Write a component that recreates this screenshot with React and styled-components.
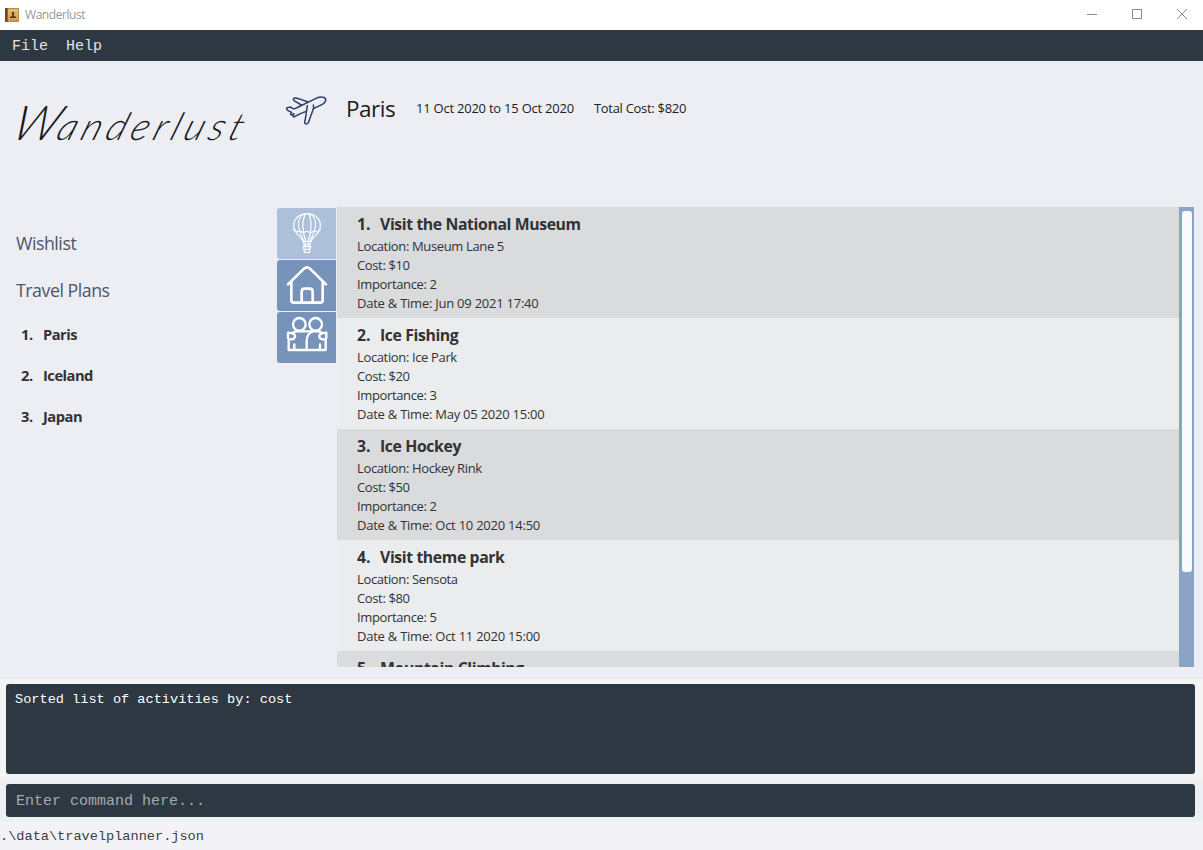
import React from 'react';
import styled, { createGlobalStyle } from 'styled-components';

const GlobalStyle = createGlobalStyle`
  * { box-sizing: border-box; }
  body { margin: 0; background: #edeef4; }
`;

const ui = '"Open Sans", "Noto Sans", sans-serif';
const mono = '"Liberation Mono", monospace';
const navy = '#2d3842';

const Window = styled.div`
  width: 1203px;
  height: 850px;
  display: flex;
  flex-direction: column;
  overflow: hidden;
  background: #edeef4;
  color: #323232;
  font-family: ${ui};
  white-space: nowrap;
`;

const TitleBar = styled.header`
  flex: 0 0 30px;
  display: flex;
  align-items: center;
  padding-left: 5px;
  background: #fff;
`;

const TitleText = styled.span`
  flex: 1;
  margin-left: 6px;
  color: #999;
  font-size: 12px;
  line-height: 16px;
  letter-spacing: -0.45px;
`;

const WindowControls = styled.div`
  display: flex;
  align-items: center;
  gap: 35px;
  padding: 0 16px 2px 0;
  svg { display: block; }
`;

const MenuBar = styled.nav`
  flex: 0 0 31px;
  display: flex;
  align-items: center;
  gap: 18px;
  padding: 2px 0 0 12px;
  background: ${navy};
  color: #e2e4e6;
  font: 15px ${mono};
`;

const Main = styled.main`
  flex: 0 0 618px;
  display: flex;
`;

const Sidebar = styled.aside`
  width: 277px;
  padding: 34px 0 0 10px;
`;

const Wordmark = styled.h1`
  height: 54px;
  margin: 0 0 82px;
  color: #17191d;
  font: italic 300 38px/54px Lato, sans-serif;
  letter-spacing: 5.1px;
  transform: skewX(-20deg);
  transform-origin: 0 80%;
  &::first-letter { font-size: 48px; letter-spacing: 0; }
`;

const SectionLink = styled.div`
  height: 47px;
  margin-left: 6px;
  line-height: 25px;
  color: #4a5763;
  font-size: 17.8px;
  letter-spacing: -0.48px;
`;

const PlanList = styled.ol`
  list-style: none;
  margin: -2px 0 0;
  padding: 0 0 0 11px;
`;

const PlanItem = styled.li`
  height: 41px;
  display: flex;
  line-height: 22px;
  font-size: 14.7px;
  font-weight: 700;
  letter-spacing: -0.5px;
`;

const PlanIndex = styled.span`
  width: 22px;
`;

const Content = styled.section`
  width: 917px;
  display: flex;
  flex-direction: column;
`;

const PlanHeader = styled.div`
  flex: 0 0 146px;
  display: flex;
  align-items: flex-start;
  padding: 24px 0 0 3px;
`;

const PlanName = styled.h2`
  width: 70px;
  margin: 0 0 0 14px;
  color: #1b1c1f;
  font-size: 22.5px;
  font-weight: 400;
  line-height: 48px;
  letter-spacing: -0.5px;
`;

const PlanMeta = styled.span`
  color: #1b1c1f;
  font-size: 13px;
  line-height: 47px;
  letter-spacing: ${(p) => p.$tracking}px;
  margin-right: 20px;
`;

const Browser = styled.div`
  height: 460px;
  display: flex;
`;

const Tabs = styled.div`
  width: 60px;
  display: flex;
  flex-direction: column;
  gap: 1px;
  padding: 1px 1px 0 0;
`;

const Tab = styled.button`
  height: 51px;
  padding: 0;
  border: 0;
  border-radius: 3px 0 0 3px;
  background: ${(p) => (p.$active ? '#adc0d9' : '#7893b9')};
  svg { display: block; }
`;

const Activities = styled.div`
  width: 842px;
  overflow: hidden;
`;

const ActivityCard = styled.article`
  height: 111px;
  padding: 6px 0 0 20px;
  background: #ebecee;
  &:nth-child(odd) { background: #dadbdd; }
`;

const ActivityTitle = styled.h3`
  display: flex;
  margin: 0 0 1px;
  font-size: 15.8px;
  line-height: 23px;
  font-weight: 700;
  letter-spacing: -0.39px;
`;

const ActivityIndex = styled.span`
  width: 23px;
  letter-spacing: 0;
`;

const Detail = styled.div`
  height: 19px;
  font-size: 13px;
  line-height: 19px;
  letter-spacing: ${(p) => p.$tracking ?? -0.36}px;
`;

const ScrollTrack = styled.div`
  width: 15px;
  padding: 4px 2px 0 3px;
  background: #8ba4c5;
`;

const ScrollThumb = styled.div`
  height: 361px;
  border-radius: 3px;
  background: #fafafd;
`;

const ResultPane = styled.div`
  flex: 0 0 100px;
  padding: 5px 8px 5px 6px;
  background: #f4f4f4;
`;

const ResultBox = styled.div`
  height: 90px;
  padding: 6px 9px;
  border-radius: 3px;
  background: ${navy};
  color: #fff;
  font: 13.6px/20px ${mono};
`;

const CommandPane = styled.div`
  flex: 0 0 43px;
  padding: 5px 8px 5px 6px;
  background: #eceff4;
`;

const CommandInput = styled.input`
  display: block;
  width: 100%;
  height: 33px;
  padding: 2px 10px 0;
  border: 0;
  border-radius: 3px;
  background: ${navy};
  font: 15px ${mono};
  &::placeholder { color: #a6a9ab; opacity: 1; }
`;

const StatusBar = styled.footer`
  flex: 1;
  background: #f3f2f7;
  color: #3c3d40;
  font: 13.6px/30px ${mono};
`;

const AppIcon = () => (
  <svg width="14" height="14" viewBox="0 0 14 14">
    <defs>
      <linearGradient id="cover" x2="0" y2="1">
        <stop stopColor="#e9bd6c" />
        <stop offset="1" stopColor="#d09c4c" />
      </linearGradient>
    </defs>
    <rect width="14" height="14" rx="1" fill="#b58646" />
    <rect x="3" y="1" width="10" height="12" fill="url(#cover)" />
    <rect width="2.5" height="14" fill="#5e4940" />
    <path d="M6.700 5a1.300 1.300 0 0 1 2.600 0L8.800 7v1l2.200.7V10H5V8.700l2.200-.7V7z" fill="#4f3c26" />
  </svg>
);

const Plane = () => (
  <svg width="52" height="45" viewBox="0 0 156 135" fill="none" stroke="#2d3e67" strokeWidth="4.500" strokeLinejoin="round" strokeLinecap="round">
    <path d="M64 60L42 47C38 43 41 38 47 39L56 41L84 51" />
    <path d="M100 71L127 58C140 51 140 40 130 37C123 34 111 38 102 43L55 66C49 69 44 73 39 71L31 66L21 68C19 70 20 73 23 76L35 82L32 86C31 88 33 90 37 89L42 86L38 92L41 96L63 85L79 79" />
    <path d="M82 62L77 96L74 112C74 118 81 119 85 113L101 69L100 60" />
  </svg>
);

const TabIcon = styled.svg.attrs({ viewBox: '0 0 177 153', width: 59, height: 51 })`
  fill: none;
  stroke: #fff;
  stroke-width: ${(p) => p.$weight}px;
  stroke-linecap: round;
  stroke-linejoin: round;
`;

const Balloon = () => (
  <TabIcon $weight={3.4}>
    <path d="M79 101C71 83 50 77 50 53C50 32 67 17 90 17S130 32 130 53C130 77 109 83 101 101Z" />
    <path d="M81 18C55 31 63 67 82 101M86 17C74 36 76 75 87 101M94 17C106 36 104 75 93 101M99 18C125 31 117 67 98 101" />
    <path d="M50 65L60 72L69 69L79 74L90 70L101 74L111 69L120 72L130 65" />
    <path d="M79 101L81 108H99L101 101M81 108L82 116M99 108L98 116M86 108V116M94 108V116M78 116H102M80 117L82 133H98L100 117M81 124H99" />
  </TabIcon>
);

const House = () => (
  <TabIcon $weight={8}>
    <path d="M33 73L81 26Q90 18 99 26L147 73M43 65V121Q43 128 50 128H130Q137 128 137 121V65M74 127V95Q74 86 83 86H98Q107 86 107 95V127" />
  </TabIcon>
);

const Friends = () => (
  <TabIcon $weight={7}>
    <circle cx="67" cy="37" r="19" />
    <circle cx="116" cy="37" r="19" />
    <path d="M35 84V114H146V84M35 82H43Q53 82 54 73Q54 65 46 64L33 62V78L35 82M47 62Q52 58 60 58H121Q130 58 135 62M146 82H138Q128 82 127 73Q127 65 135 64L148 62V78L146 82M89 114V88C89 72 97 60 109 58M52 97V114M129 97V114" />
  </TabIcon>
);

const plans = ['Paris', 'Iceland', 'Japan'];

const activities = [
  { name: 'Visit the National Museum', location: 'Museum Lane 5', cost: 10, importance: 2, when: 'Jun 09 2021 17:40' },
  { name: 'Ice Fishing', location: 'Ice Park', cost: 20, importance: 3, when: 'May 05 2020 15:00' },
  { name: 'Ice Hockey', location: 'Hockey Rink', cost: 50, importance: 2, when: 'Oct 10 2020 14:50' },
  { name: 'Visit theme park', location: 'Sensota', cost: 80, importance: 5, when: 'Oct 11 2020 15:00' },
  { name: 'Mountain Climbing' },
];

export default function App() {
  return (
    <Window>
      <GlobalStyle />
      <TitleBar>
        <AppIcon />
        <TitleText>Wanderlust</TitleText>
        <WindowControls>
          <svg width="10" height="10" stroke="#8c8c8c"><path d="M0 5.500H10" /></svg>
          <svg width="10" height="10" fill="none" stroke="#8c8c8c"><rect x=".5" y=".5" width="9" height="9" /></svg>
          <svg width="10" height="10" stroke="#8c8c8c"><path d="M0 0L10 10M10 0L0 10" /></svg>
        </WindowControls>
      </TitleBar>
      <MenuBar>
        <span>File</span>
        <span>Help</span>
      </MenuBar>
      <Main>
        <Sidebar>
          <Wordmark>Wanderlust</Wordmark>
          <SectionLink>Wishlist</SectionLink>
          <SectionLink>Travel Plans</SectionLink>
          <PlanList>
            {plans.map((plan, i) => (
              <PlanItem key={plan}>
                <PlanIndex>{i + 1}.</PlanIndex>
                {plan}
              </PlanItem>
            ))}
          </PlanList>
        </Sidebar>
        <Content>
          <PlanHeader>
            <Plane />
            <PlanName>Paris</PlanName>
            <PlanMeta $tracking={-0.23}>11 Oct 2020 to 15 Oct 2020</PlanMeta>
            <PlanMeta $tracking={-0.29}>Total Cost: $820</PlanMeta>
          </PlanHeader>
          <Browser>
            <Tabs>
              <Tab $active><Balloon /></Tab>
              <Tab><House /></Tab>
              <Tab><Friends /></Tab>
            </Tabs>
            <Activities>
              {activities.map((a, i) => (
                <ActivityCard key={a.name}>
                  <ActivityTitle>
                    <ActivityIndex>{i + 1}.</ActivityIndex>
                    {a.name}
                  </ActivityTitle>
                  {a.location && (
                    <>
                      <Detail>Location: {a.location}</Detail>
                      <Detail>Cost: ${a.cost}</Detail>
                      <Detail>Importance: {a.importance}</Detail>
                      <Detail $tracking={-0.24}>Date &amp; Time: {a.when}</Detail>
                    </>
                  )}
                </ActivityCard>
              ))}
            </Activities>
            <ScrollTrack>
              <ScrollThumb />
            </ScrollTrack>
          </Browser>
        </Content>
      </Main>
      <ResultPane>
        <ResultBox>Sorted list of activities by: cost</ResultBox>
      </ResultPane>
      <CommandPane>
        <CommandInput placeholder="Enter command here..." />
      </CommandPane>
      <StatusBar>.\data\travelplanner.json</StatusBar>
    </Window>
  );
}
